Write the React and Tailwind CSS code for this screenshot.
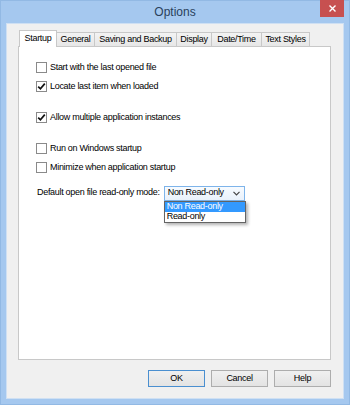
import React from "react";

function Check({ checked, label }) {
  return (
    <div className="flex h-[19px] items-center gap-[3px]">
      <div className="flex h-[11px] w-[11px] items-center justify-center border border-[#8a8a8a] bg-white">
        {checked && (
          <svg width="9" height="9" viewBox="0 0 9 9">
            <path d="M1.2 4.6 L3.4 6.8 L7.8 1.6" fill="none" stroke="#111" strokeWidth="1.7" />
          </svg>
        )}
      </div>
      <span>{label}</span>
    </div>
  );
}

function Tab({ label, w, selected }) {
  if (selected) {
    return (
      <div
        className={`relative z-10 mb-[-1px] flex h-[17px] ${w} items-center justify-center border border-b-0 border-[#c8c8c8] bg-white pb-[1px]`}
      >
        {label}
      </div>
    );
  }
  return (
    <div
      className={`flex h-[14px] ${w} items-center justify-center border-t border-r border-[#c8c8c8] bg-gradient-to-b from-[#f3f3f3] to-[#e7e7e7]`}
    >
      {label}
    </div>
  );
}

function Btn({ label, def }) {
  return (
    <div
      className={`flex h-[17px] w-[57px] items-center justify-center border bg-gradient-to-b from-[#f0f0f0] to-[#e3e3e3] ${
        def ? "border-[#4a8fd0]" : "border-[#adadad]"
      }`}
    >
      {label}
    </div>
  );
}

export default function App() {
  return (
    <div className="flex h-[405px] w-[350px] flex-col bg-[#a5c8ef] px-[6px] pb-[6px] font-['Liberation_Sans',Arial,sans-serif] text-[9px] tracking-[-0.3px] text-black shadow-[inset_0_0_0_1px_#92b9e4]">
      <div className="grid h-[23px] grid-cols-[1fr_auto_1fr] items-start">
        <div />
        <div className="self-center pt-[1px] text-[12px] tracking-normal text-[#2a3f5c]">Options</div>
        <div className="flex justify-end">
          <div className="flex h-[17px] w-[24px] items-center justify-center bg-[#c75050]">
            <svg width="7" height="7" viewBox="0 0 7 7">
              <path d="M0.5 0.5 L6.5 6.5 M6.5 0.5 L0.5 6.5" stroke="#fff" strokeWidth="1.4" />
            </svg>
          </div>
        </div>
      </div>

      <div className="flex flex-1 flex-col border border-[#cfe0f3] bg-[#f0f0f0] pl-[11px] pr-[12px] pt-[6px]">
        <div className="flex h-[16px] items-end pl-[1px]">
          <Tab label="Startup" w="w-[38px]" selected />
          <Tab label="General" w="w-[38px]" />
          <Tab label="Saving and Backup" w="w-[82px]" />
          <Tab label="Display" w="w-[35px]" />
          <Tab label="Date/Time" w="w-[50px]" />
          <Tab label="Text Styles" w="w-[48px]" />
        </div>

        <div className="flex flex-1 flex-col border border-[#c8c8c8] bg-white pl-[17px] pt-[11px]">
          <Check label="Start with the last opened file" />
          <Check checked label="Locate last item when loaded" />
          <div className="mt-[12px]">
            <Check checked label="Allow multiple application instances" />
          </div>
          <div className="mt-[12px]">
            <Check label="Run on Windows startup" />
          </div>
          <Check label="Minimize when application startup" />

          <div className="ml-[1px] mt-[8px] flex h-[16px] items-center gap-[4px]">
            <span>Default open file read-only mode:</span>
            <div className="relative">
              <div className="flex h-[15px] w-[81px] items-center justify-between border border-[#7eb4ea] bg-gradient-to-b from-[#f7fbff] to-[#e9f1fb] pl-[3px] pr-[4px]">
                <span>Non Read-only</span>
                <svg width="7" height="5" viewBox="0 0 7 5">
                  <path d="M0.5 0.8 L3.5 3.8 L6.5 0.8" fill="none" stroke="#444" strokeWidth="1.2" />
                </svg>
              </div>
              <div className="absolute left-0 top-[15px] z-20 flex w-[82px] flex-col border border-[#646464] bg-white shadow-[2px_2px_3px_rgba(0,0,0,0.3)]">
                <div className="flex h-[10px] items-center bg-[#3399ff] pl-[2px] text-white">Non Read-only</div>
                <div className="flex h-[10px] items-center pl-[2px]">Read-only</div>
              </div>
            </div>
          </div>
        </div>

        <div className="mb-[11px] mt-[10px] flex justify-end gap-[6px]">
          <Btn label="OK" def />
          <Btn label="Cancel" />
          <Btn label="Help" />
        </div>
      </div>
    </div>
  );
}
